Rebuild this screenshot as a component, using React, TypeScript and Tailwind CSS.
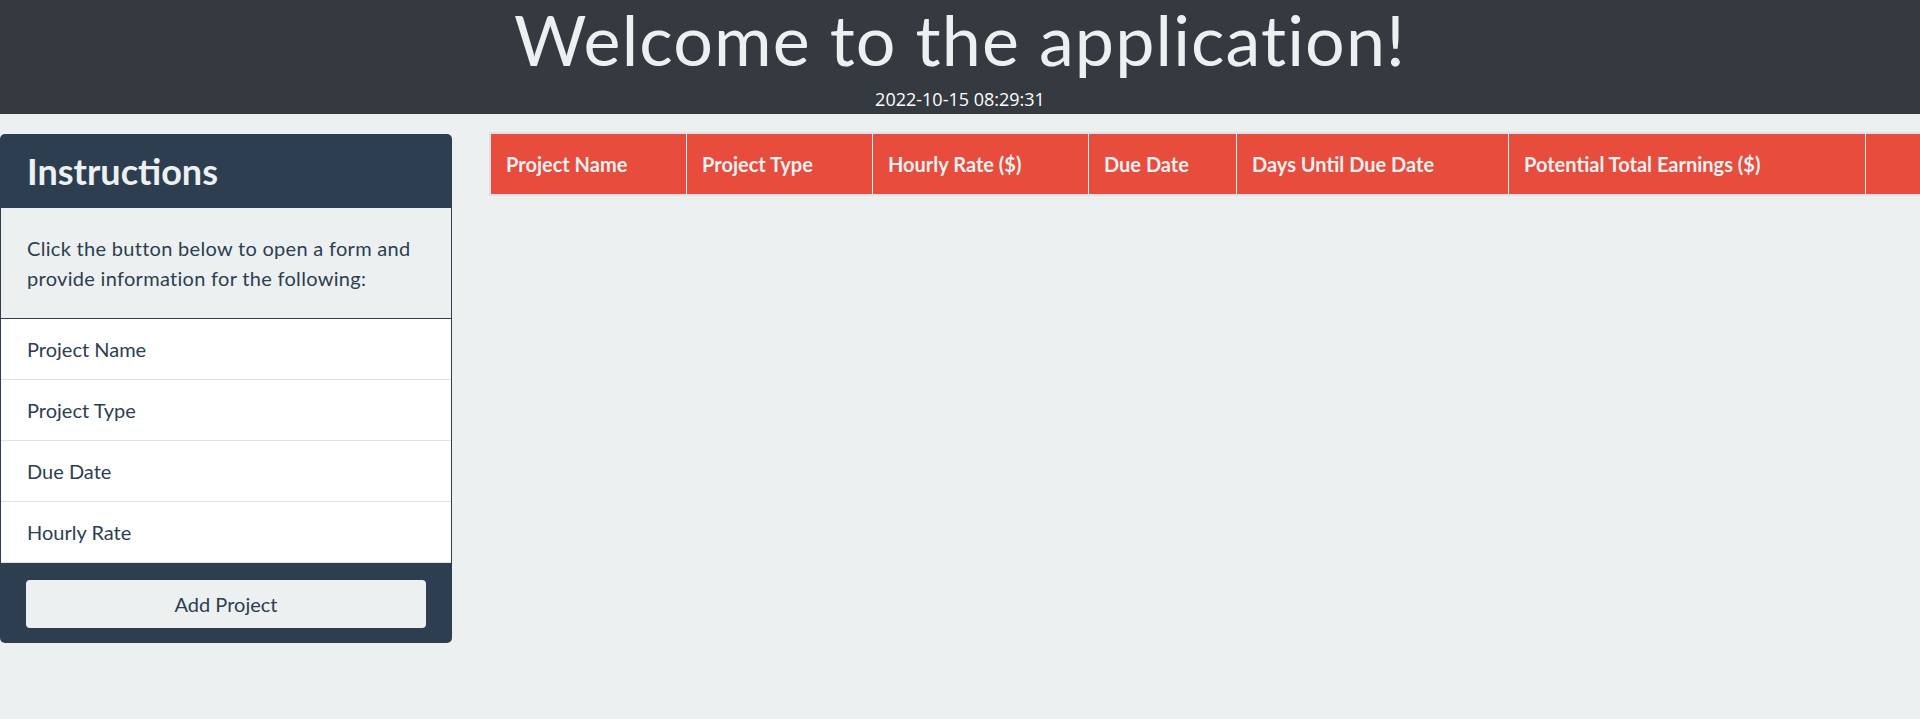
const fields = ["Project Name", "Project Type", "Due Date", "Hourly Rate"];

const columns = [
    "Project Name",
    "Project Type",
    "Hourly Rate ($)",
    "Due Date",
    "Days Until Due Date",
    "Potential Total Earnings ($)",
    "",
];

const App: React.FC = () => {
    return (
        <div className="min-h-screen bg-[#ecf0f1] font-['Lato',sans-serif]">
            <header className="h-[114px] bg-[#343a40] flex flex-col items-center">
                <h1 className="text-[70px] leading-[78px] font-normal tracking-[1.1px] text-[#ecf0f1]">
                    Welcome to the application!
                </h1>
                <p className="mt-[11px] text-[18px] leading-[20px] text-white font-['Open_Sans',sans-serif]">
                    2022-10-15 08:29:31
                </p>
            </header>

            <main className="flex items-start pt-[20px]">
                <section className="w-[452px] shrink-0 rounded-[5px] overflow-hidden bg-[#2c3e50]">
                    <div className="h-[74px] px-[27px] flex items-center">
                        <h2 className="text-[36px] leading-none font-bold text-[#ecf0f1]">Instructions</h2>
                    </div>
                    <div className="mx-px bg-[#ecf0f1] px-[26px] py-[25px] border-b border-[#2c3e50] text-[20px] leading-[30px] tracking-[0.3px] text-[#2c3e50]">
                        Click the button below to open a form and provide information for the following:
                    </div>
                    <ul className="mx-px bg-white">
                        {fields.map(item => (
                            <li key={item} className="px-[26px] py-[15px] border-b border-[#dee2e6] text-[20px] leading-[30px] text-[#2c3e50]">
                                {item}
                            </li>
                        ))}
                    </ul>
                    <div className="px-[26px] pt-[17px] pb-[15px]">
                        <button className="w-full h-[48px] rounded-[4px] bg-[#ecf0f1] text-[20px] text-[#2c3e50]">
                            Add Project
                        </button>
                    </div>
                </section>

                <div className="flex-1 ml-[37px] -mt-[2px] border-l-2 border-y-2 border-[#dee2e6]">
                    <div className="grid grid-cols-[196px_186px_216px_148px_272px_357px_1fr] h-[60px] bg-[#e74c3c]">
                        {columns.map((col, i) => (
                            <div
                                key={i}
                                className="flex items-center px-[15px] border-r border-[#ecf0f1] last:border-r-0 text-[20px] font-bold text-[#ecf0f1] whitespace-nowrap"
                            >
                                {col}
                            </div>
                        ))}
                    </div>
                </div>
            </main>
        </div>
    );
};

export default App;
